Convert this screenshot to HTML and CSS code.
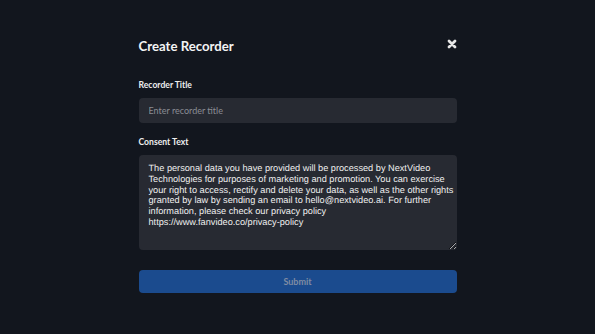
FILE: index.html
```html
<!DOCTYPE html>
<html lang="en">
<head>
<meta charset="UTF-8" />
<title>Create Recorder</title>
<link rel="stylesheet" href="styles.css">
</head>
<body>
<div class="modal">
  <div class="modal-head">
    <h2>Create Recorder</h2>
    <button class="close" aria-label="Close">
      <svg viewBox="0 0 10 10" width="10" height="10">
        <path d="M2 2 L8 8 M8 2 L2 8" stroke="#e6e6e6" stroke-width="2.8" stroke-linecap="round" />
      </svg>
    </button>
  </div>

  <label class="field-label" for="title">Recorder Title</label>
  <input id="title" class="field" type="text" placeholder="Enter recorder title">

  <label class="field-label" for="consent">Consent Text</label>
  <textarea id="consent" class="field area">The personal data you have provided will be processed by NextVideo
Technologies for purposes of marketing and promotion. You can exercise
your right to access, rectify and delete your data, as well as the other rights
granted by law by sending an email to hello@nextvideo.ai. For further
information, please check our privacy policy
https://www.fanvideo.co/privacy-policy</textarea>

  <button class="submit">Submit</button>
</div>
</body>
</html>
```

FILE: styles.css
```css
body {
  margin: 0;
  background: #12161e;
  font-family: Lato, "Liberation Sans", sans-serif;
  color: #f2f2f2;
}
.modal {
  width: 318px;
  margin: 0 auto;
  padding-top: 36px;
  display: flex;
  flex-direction: column;
}
.modal-head {
  display: flex;
  justify-content: space-between;
  align-items: center;
  height: 20px;
  margin-bottom: 24px;
}
.modal-head h2 {
  margin: 0;
  font-size: 13.2px;
  font-weight: bold;
  color: #f4f4f4;
}
.close {
  background: none;
  border: 0;
  padding: 0;
  margin-top: -4px;
  display: flex;
  cursor: pointer;
}
.field-label {
  font-size: 8.6px;
  font-weight: bold;
  color: #eeeeee;
  margin-bottom: 8px;
}
.field {
  box-sizing: border-box;
  width: 100%;
  background: #272a32;
  border: 0;
  border-radius: 4px;
  color: #f0f0f0;
  outline: none;
}
input.field {
  height: 25px;
  padding: 0 10px;
  font-family: Lato, sans-serif;
  font-size: 9px;
  margin-bottom: 14px;
}
input.field::placeholder {
  color: #8a8d94;
}
.area {
  height: 95px;
  padding: 8px 0 6px 10px;
  font-family: "Liberation Sans", Arial, sans-serif;
  font-size: 9.2px;
  line-height: 10.8px;
  text-rendering: geometricPrecision;
  white-space: pre;
  overflow: hidden;
  resize: vertical;
  margin-bottom: 20px;
}
.submit {
  height: 23px;
  border: 0;
  border-radius: 4px;
  background: #1b4b8e;
  color: #7f8ca3;
  font-family: Lato, sans-serif;
  font-size: 9px;
  font-weight: bold;
}
```
